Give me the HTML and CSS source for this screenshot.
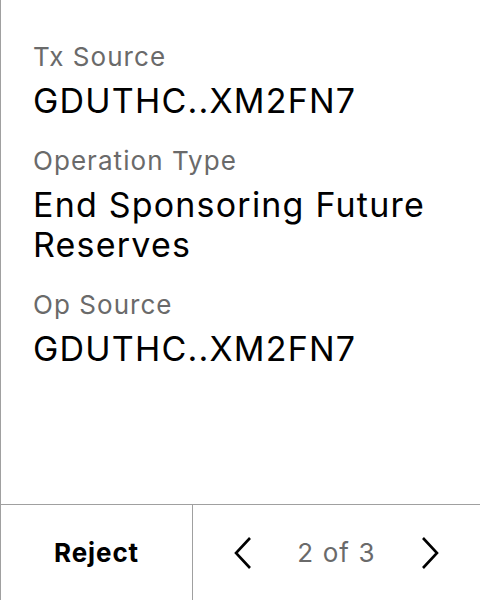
FILE: index.html
```html
<!DOCTYPE html>
<html>
<head>
<meta charset="utf-8">
<link rel="stylesheet" href="styles.css">
</head>
<body>
<div class="screen">
  <div class="details">
    <div class="field">
      <div class="label">Tx Source</div>
      <div class="value">GDUTHC..XM2FN7</div>
    </div>
    <div class="field">
      <div class="label">Operation Type</div>
      <div class="value">End Sponsoring Future Reserves</div>
    </div>
    <div class="field">
      <div class="label">Op Source</div>
      <div class="value">GDUTHC..XM2FN7</div>
    </div>
  </div>
  <div class="footer">
    <div class="reject">Reject</div>
    <div class="pager">
      <svg class="chev" width="20" height="34" viewBox="0 0 20 34"><path d="M17 2 L3 17 L17 32" fill="none" stroke="#000" stroke-width="2.6"/></svg>
      <span class="count">2 of 3</span>
      <svg class="chev" width="20" height="34" viewBox="0 0 20 34"><path d="M3 2 L17 17 L3 32" fill="none" stroke="#000" stroke-width="2.6"/></svg>
    </div>
  </div>
</div>
</body>
</html>
```
FILE: styles.css
```css
html, body {
  margin: 0;
  padding: 0;
  background: #fff;
}
body {
  font-family: Inter, "Noto Sans", sans-serif;
  color: #000;
}
.screen {
  width: 480px;
  height: 600px;
  box-sizing: border-box;
  border-left: 1px solid #a0a0a0;
  display: flex;
  flex-direction: column;
}
.details {
  flex: 1;
  padding: 41px 32px 0 32px;
  display: flex;
  flex-direction: column;
  gap: 24px;
}
.label {
  font-size: 26px;
  line-height: 32px;
  letter-spacing: 1.05px;
  color: #6a6a6a;
}
.value {
  font-size: 34px;
  line-height: 40px;
  letter-spacing: 1.2px;
  margin-top: 8px;
}
.footer {
  height: 96px;
  box-sizing: border-box;
  border-top: 1px solid #a0a0a0;
  display: flex;
}
.reject {
  width: 192px;
  box-sizing: border-box;
  border-right: 1px solid #a0a0a0;
  display: flex;
  align-items: center;
  justify-content: center;
  font-size: 26px;
  font-weight: 700;
  letter-spacing: 0.9px;
}
.pager {
  flex: 1;
  display: flex;
  align-items: center;
  justify-content: space-between;
  padding: 0 40px 0 40px;
}
.count {
  font-size: 26px;
  letter-spacing: 1.1px;
  color: #6a6a6a;
}
```
